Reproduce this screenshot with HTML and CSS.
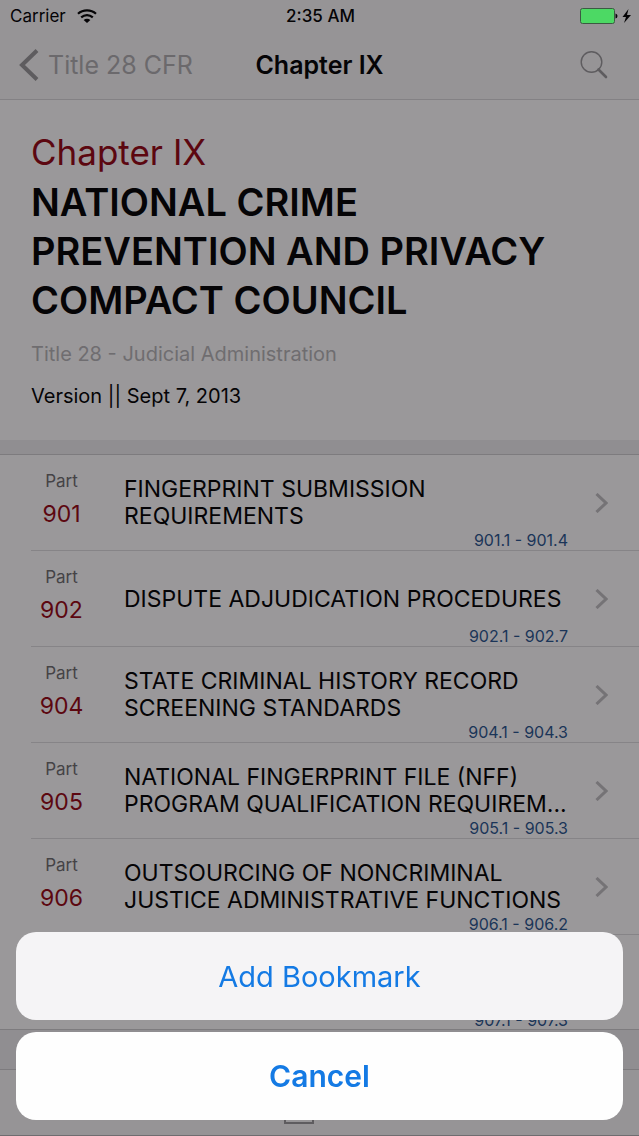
FILE: index.html
```html
<!DOCTYPE html>
<html lang="en">
  <head>
    <meta charset="UTF-8" />
    <meta name="viewport" content="width=device-width, initial-scale=1.0" />
    <title>Chapter IX</title>
    <link rel="stylesheet" href="styles.css">
  </head>
  <body>
    <div class="status-bar">
      <div class="carrier">
        <span>Carrier</span>
        <svg width="20" height="15" viewBox="0 0 20 15" fill="none" stroke="#050406" stroke-width="2.2">
          <path d="M1 4.8C6 .2 14 .2 19 4.8" />
          <path d="M4.2 8.4C7.6 5.4 12.4 5.4 15.8 8.4" />
          <path d="M10 14L6.6 10.9C8.6 9.2 11.4 9.2 13.4 10.9Z" fill="#050406" stroke="none" />
        </svg>
      </div>
      <span class="time">2:35 AM</span>
      <div class="battery">
        <svg width="52" height="16" viewBox="0 0 52 16">
          <rect x="1.5" y=".5" width="34" height="15" rx="2" fill="#4cd964" stroke="#3c5a42" />
          <path d="M36.5 5.5Q38.5 6 38.5 8T36.5 10.5Z" fill="#050406" />
          <path d="M49.5 1L43.5 9H47L45 15L52 7H48Z" fill="#050406" />
        </svg>
      </div>
    </div>

    <nav class="nav-bar">
      <a class="back" href="#">
        <svg width="20" height="32" viewBox="0 0 20 32" fill="none" stroke="#5e5c5f" stroke-width="4">
          <path d="M18 1.5L3 16L18 30.5" />
        </svg>
        <span>Title 28 CFR</span>
      </a>
      <h1>Chapter IX</h1>
      <button class="search" aria-label="Search">
        <svg width="28" height="28" viewBox="0 0 28 28" fill="none" stroke="#5e5c5f">
          <circle cx="11.5" cy="11" r="10.3" stroke-width="1.4" />
          <path d="M18.5 18.5L26 26" stroke-width="2.6" stroke-linecap="round" />
        </svg>
      </button>
    </nav>

    <header class="chapter">
      <p class="chapter-number">Chapter IX</p>
      <h2>NATIONAL CRIME PREVENTION AND PRIVACY COMPACT COUNCIL</h2>
      <p class="chapter-title">Title 28 - Judicial Administration</p>
      <p class="chapter-version">Version || Sept 7, 2013</p>
    </header>

    <ul class="parts">
      <li>
        <a href="#">
          <span class="part">Part <b>901</b></span>
          <span class="info">
            <span class="name"><span>FINGERPRINT SUBMISSION REQUIREMENTS</span></span>
            <span class="range">901.1 - 901.4</span>
          </span>
          <svg class="arrow" viewBox="0 0 13 20"><path d="M1.5 1L11 10L1.5 19" /></svg>
        </a>
      </li>
      <li>
        <a href="#">
          <span class="part">Part <b>902</b></span>
          <span class="info">
            <span class="name"><span>DISPUTE ADJUDICATION PROCEDURES</span></span>
            <span class="range">902.1 - 902.7</span>
          </span>
          <svg class="arrow" viewBox="0 0 13 20"><path d="M1.5 1L11 10L1.5 19" /></svg>
        </a>
      </li>
      <li>
        <a href="#">
          <span class="part">Part <b>904</b></span>
          <span class="info">
            <span class="name"><span>STATE CRIMINAL HISTORY RECORD SCREENING STANDARDS</span></span>
            <span class="range">904.1 - 904.3</span>
          </span>
          <svg class="arrow" viewBox="0 0 13 20"><path d="M1.5 1L11 10L1.5 19" /></svg>
        </a>
      </li>
      <li>
        <a href="#">
          <span class="part">Part <b>905</b></span>
          <span class="info">
            <span class="name"><span>NATIONAL FINGERPRINT FILE (NFF)<br>PROGRAM QUALIFICATION REQUIREM...</span></span>
            <span class="range">905.1 - 905.3</span>
          </span>
          <svg class="arrow" viewBox="0 0 13 20"><path d="M1.5 1L11 10L1.5 19" /></svg>
        </a>
      </li>
      <li>
        <a href="#">
          <span class="part">Part <b>906</b></span>
          <span class="info">
            <span class="name"><span>OUTSOURCING OF NONCRIMINAL JUSTICE ADMINISTRATIVE FUNCTIONS</span></span>
            <span class="range">906.1 - 906.2</span>
          </span>
          <svg class="arrow" viewBox="0 0 13 20"><path d="M1.5 1L11 10L1.5 19" /></svg>
        </a>
      </li>
      <li>
        <a href="#">
          <span class="part"></span>
          <span class="info">
            <span class="name"></span>
            <span class="range">907.1 - 907.3</span>
          </span>
          <svg class="arrow" viewBox="0 0 13 20"><path d="M1.5 1L11 10L1.5 19" /></svg>
        </a>
      </li>
    </ul>

    <footer class="toolbar">
      <svg width="30" height="30" viewBox="0 0 30 30" fill="none" stroke="#5e5c5f" stroke-width="2">
        <path d="M9 9H1V29H29V9H21M15 20V1M9 7L15 1L21 7" />
      </svg>
    </footer>

    <div class="action-sheet">
      <button class="action">Add Bookmark</button>
      <button class="cancel">Cancel</button>
    </div>
  </body>
</html>
```
FILE: styles.css
```css
* {
  box-sizing: border-box;
}

body {
  display: flex;
  flex-direction: column;
  min-height: 100vh;
  margin: 0;
  font-family: Inter, "Liberation Sans", sans-serif;
  background-color: #908e91;
  color: #050406;
}

h1,
h2,
p,
ul {
  margin: 0;
  padding: 0;
}

a {
  color: inherit;
  text-decoration: none;
}

button {
  border: none;
  padding: 0;
  font-family: inherit;
  cursor: pointer;
}

svg {
  display: block;
}

/* Status bar and navigation */
.status-bar,
.nav-bar {
  display: grid;
  grid-template-columns: 1fr auto 1fr;
  align-items: center;
  background-color: #969496;
}

.status-bar {
  height: 32px;
  padding: 0 8px 0 10px;
  font-size: 17px;
}

.carrier {
  display: flex;
  align-items: center;
  gap: 11px;
}

.time {
  font-weight: 500;
}

.battery,
.search {
  justify-self: end;
}

.nav-bar {
  height: 68px;
  padding: 0 19px 2px;
  border-bottom: 1px solid #838184;
}

.back {
  display: flex;
  align-items: center;
  gap: 9px;
  font-size: 25px;
  color: #6b696c;
}

.nav-bar h1 {
  font-size: 25px;
  font-weight: 600;
}

.search {
  padding: 0 12px;
  background: none;
}

/* Chapter heading */
.chapter {
  height: 340px;
  padding: 29px 31px 0;
  background-color: #9a989a;
}

.chapter-number {
  font-size: 35px;
  line-height: 46px;
  color: #5c0710;
}

.chapter h2 {
  margin-top: 3px;
  font-size: 38px;
  font-weight: 600;
  line-height: 49px;
}

.chapter-title,
.chapter-version {
  font-size: 20px;
  line-height: 24px;
}

.chapter-title {
  margin-top: 17px;
  color: #6f6d70;
}

.chapter-version {
  margin-top: 18px;
}

/* List of parts */
.parts {
  margin-top: 14px;
  border-top: 1px solid #7d7b7e;
  border-bottom: 1px solid #7d7b7e;
  background-color: #9a989a;
  list-style: none;
}

.parts li {
  padding-left: 31px;
}

.parts a {
  display: flex;
  height: 96px;
  padding-right: 31px;
  border-bottom: 1px solid #868487;
}

.parts li:last-child a {
  height: 94px;
  border-bottom: none;
}

.part {
  width: 61px;
  padding-top: 16px;
  font-size: 17px;
  line-height: 20px;
  text-align: center;
  color: #454346;
}

.part b {
  display: block;
  margin-top: 7px;
  font-size: 23px;
  font-weight: 400;
  line-height: 32px;
  color: #5c0710;
}

.info {
  flex: 1;
  min-width: 0;
  margin-left: 32px;
  padding-top: 21px;
}

/* Names may run a little past the range below them */
.name {
  display: flex;
  align-items: center;
  height: 54px;
  margin-right: -8px;
  font-size: 23px;
  line-height: 27px;
}

.range {
  display: block;
  font-size: 16px;
  line-height: 20px;
  text-align: right;
  color: #1b3558;
}

.arrow {
  align-self: center;
  width: 13px;
  height: 20px;
  margin-left: 27px;
  fill: none;
  stroke: #757376;
  stroke-width: 3;
}

/* Bottom toolbar */
.toolbar {
  display: flex;
  flex: 1;
  justify-content: center;
  align-items: flex-end;
  margin-top: 39px;
  padding: 0 41px 11px 0;
  border-top: 1px solid #7d7b7e;
  border-bottom: 1px solid #6f6d70;
  background-color: #969496;
}

/* Action sheet */
.action-sheet {
  position: fixed;
  right: 16px;
  bottom: 16px;
  left: 16px;
  display: flex;
  flex-direction: column;
  gap: 12px;
}

.action-sheet button {
  height: 88px;
  border-radius: 20px;
  color: #147ae4;
}

.action-sheet .action {
  background-color: #f5f4f6;
  font-size: 29px;
}

.action-sheet .cancel {
  background-color: #fefefe;
  font-size: 30px;
  font-weight: 600;
}
```
